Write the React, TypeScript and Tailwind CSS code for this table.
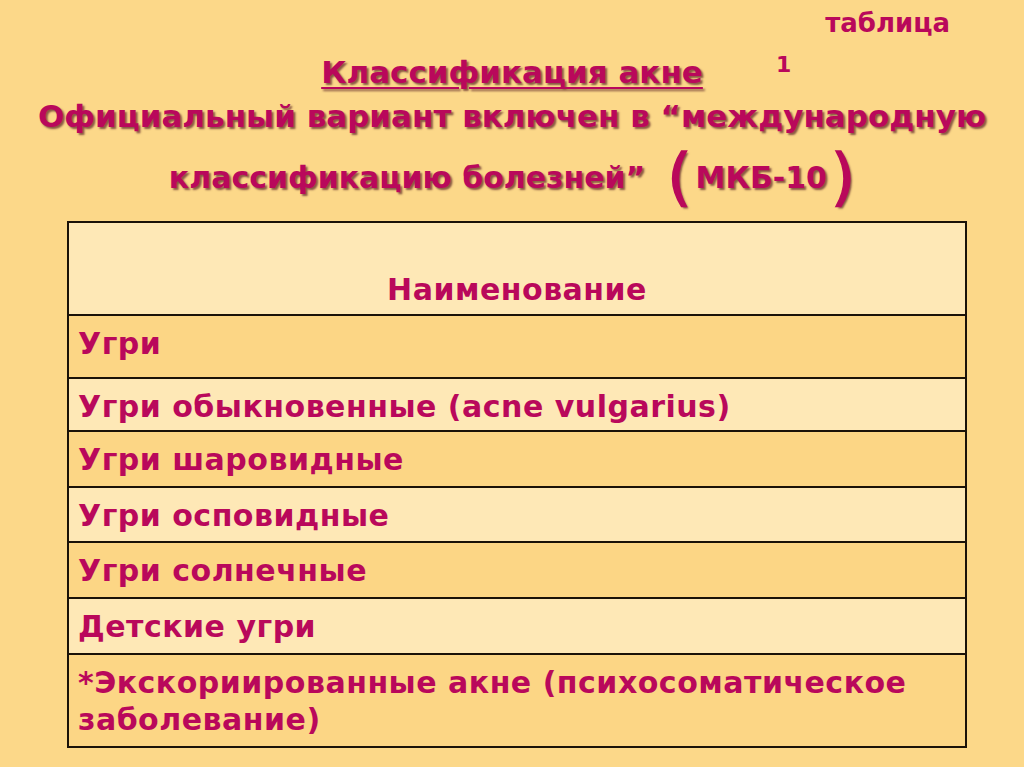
const rows: { text: string; tone: 'dark' | 'light'; h: string }[] = [
  { text: 'Угри', tone: 'dark', h: 'h-[63px]' },
  { text: 'Угри обыкновенные (acne vulgarius)', tone: 'light', h: 'h-[53px]' },
  { text: 'Угри шаровидные', tone: 'dark', h: 'h-[56px]' },
  { text: 'Угри осповидные', tone: 'light', h: 'h-[55px]' },
  { text: 'Угри солнечные', tone: 'dark', h: 'h-[56px]' },
  { text: 'Детские угри', tone: 'light', h: 'h-[56px]' },
  { text: '*Экскориированные акне (психосоматическое заболевание)', tone: 'dark', h: 'h-[91px]' },
]

const shadow = '[text-shadow:2px_2px_2px_rgba(60,0,20,0.6)]'

export default function App() {
  return (
    <div className="h-[767px] w-[1024px] overflow-hidden bg-[#fcd889] font-['DejaVu_Sans',sans-serif] text-[#b9085b]">
      <div className="relative h-[221px]">
        <div className="absolute right-[74px] top-[4px] text-[26px] font-bold">таблица</div>
        <div className="absolute left-[776px] top-[48px] text-[22px] font-bold">1</div>
        <div className="flex flex-col items-center pt-[50px]">
          <div className={`text-[31px] font-bold leading-[44px] underline decoration-2 underline-offset-4 ${shadow}`}>
            Классификация акне
          </div>
          <div className={`text-[31px] font-bold leading-[44px] ${shadow}`}>
            Официальный вариант включен в “международную
          </div>
          <div className={`mt-[8px] flex items-center text-[30px] font-bold ${shadow}`}>
            <span>классификацию болезней”</span>
            <span className="ml-[22px] text-[62px] font-normal leading-[62px] [-webkit-text-stroke:1.5px_#b9085b]">(</span>
            <span className="mx-[4px]">МКБ-10</span>
            <span className="text-[62px] font-normal leading-[62px] [-webkit-text-stroke:1.5px_#b9085b]">)</span>
          </div>
        </div>
      </div>
      <div className="ml-[67px] w-[900px] border-2 border-[#1a1208]">
        <div className="flex h-[93px] items-end justify-center border-b-2 border-[#1a1208] bg-[#fee8b6] pb-[2px] text-[30px] font-bold tracking-[0.5px]">
          Наименование
        </div>
        {rows.map((r, i) => (
          <div
            key={i}
            className={`${r.h} ${i < rows.length - 1 ? 'border-b-2 border-[#1a1208]' : ''} ${r.tone === 'dark' ? 'bg-[#fcd685]' : 'bg-[#fee8b6]'} px-[9px] pt-[9px] text-[30px] font-bold leading-[37px] tracking-[0.5px]`}
          >
            {r.text}
          </div>
        ))}
      </div>
    </div>
  )
}
